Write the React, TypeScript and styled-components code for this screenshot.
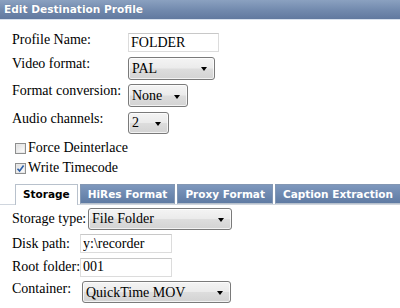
import { createGlobalStyle } from "styled-components";
import styled from "styled-components";

const GlobalStyle = createGlobalStyle`
  html, body {
    margin: 0;
    padding: 0;
    background: #ffffff;
  }
  body {
    font-family: "Liberation Serif", "Times New Roman", serif;
    font-size: 14px;
    color: #000;
  }
`;

const Page = styled.div`
  width: 400px;
  height: 308px;
  overflow: hidden;
  background: #fff;
`;

const Header = styled.div`
  height: 19px;
  line-height: 19px;
  padding-left: 4px;
  background: linear-gradient(to bottom, #8ba1c0 0%, #7189ad 55%, #61799f 100%);
  border-bottom: 1px solid #d9e2ee;
  color: #fff;
  font-family: "DejaVu Sans", Verdana, sans-serif;
  font-weight: bold;
  font-size: 10.6px;
  text-shadow: 0 0 1px rgba(40, 60, 90, 0.4);
`;

const FormSection = styled.div`
  padding: 13px 0 0 12px;
`;

const FieldGrid = styled.div`
  display: grid;
  grid-template-columns: 116px auto;
  row-gap: 4.5px;
  justify-items: start;
`;

const Label = styled.label<{ $width?: number }>`
  font-size: 14px;
  line-height: 16px;
  white-space: nowrap;
  margin-top: -1px;
  align-self: start;
  ${(p) => (p.$width ? `width: ${p.$width}px; flex: none;` : "")}
`;

const TextInput = styled.input<{ $width: number }>`
  box-sizing: border-box;
  width: ${(p) => p.$width}px;
  height: 19px;
  margin: 0;
  padding: 0 2px;
  border: 1px solid #dcdcdc;
  border-top-color: #c8c8c8;
  background: #fff;
  font-family: "Liberation Serif", "Times New Roman", serif;
  font-size: 14px;
  color: #000;
  outline: none;
`;

const SelectWrap = styled.div<{ $width: number; $height?: number }>`
  position: relative;
  box-sizing: border-box;
  width: ${(p) => p.$width}px;
  height: ${(p) => p.$height ?? 23}px;
  border: 1px solid #7a7a7a;
  border-radius: 3px;
  background: linear-gradient(to bottom, #f4f4f4 0%, #ebebeb 48%, #dddddd 52%, #d3d3d3 100%);
  box-shadow: inset 0 0 0 1px rgba(255, 255, 255, 0.7);

  &::after {
    content: "";
    position: absolute;
    right: 7px;
    top: 50%;
    margin-top: -1px;
    border-left: 3.5px solid transparent;
    border-right: 3.5px solid transparent;
    border-top: 4px solid #000;
  }
`;

const Select = styled.select`
  appearance: none;
  -webkit-appearance: none;
  width: 100%;
  height: 100%;
  margin: 0;
  padding: 0 16px 0 3px;
  border: none;
  background: transparent;
  font-family: "Liberation Serif", "Times New Roman", serif;
  font-size: 14px;
  color: #000;
  outline: none;
`;

const CheckList = styled.div`
  margin-top: 5px;
  padding-left: 3px;
`;

const CheckRow = styled.label`
  display: flex;
  align-items: center;
  height: 19.5px;
  font-size: 14px;
  line-height: 16px;
`;

const CheckBox = styled.span`
  box-sizing: border-box;
  width: 11px;
  height: 11px;
  margin-right: 2px;
  margin-top: 1px;
  border: 1px solid #8e8f8f;
  background: linear-gradient(to bottom right, #dcdcdc 0%, #f2f2f2 60%, #ffffff 100%);
  box-shadow: inset 0 0 0 1px #e9e9e9;
  display: flex;
  align-items: center;
  justify-content: center;
`;

const TabStrip = styled.div`
  display: flex;
  gap: 2px;
  margin-top: 6px;
  padding-left: 15px;
  border-bottom: 1px solid #d0d6de;
  height: 20px;
  align-items: flex-end;
`;

const Tab = styled.div<{ $active?: boolean }>`
  box-sizing: border-box;
  height: ${(p) => (p.$active ? 21 : 20)}px;
  margin-bottom: ${(p) => (p.$active ? -1 : 0)}px;
  padding: 0 7px;
  line-height: 18px;
  font-family: "DejaVu Sans", Verdana, sans-serif;
  font-weight: bold;
  font-size: 10.5px;
  white-space: nowrap;
  border: 1px solid ${(p) => (p.$active ? "#b8c1cc" : "#8397b3")};
  border-bottom: ${(p) => (p.$active ? "none" : "1px solid #b6c0cc")};
  color: ${(p) => (p.$active ? "#000" : "#fff")};
  background: ${(p) =>
    p.$active
      ? "#ffffff"
      : "linear-gradient(to bottom, #7e98bd 0%, #6e89b0 50%, #5f7ba3 100%)"};
`;

const TabPanel = styled.div`
  padding: 3px 0 0 12px;
  display: flex;
  flex-direction: column;
  gap: 4.5px;
`;

const PanelRow = styled.div<{ $align?: string }>`
  display: flex;
  align-items: ${(p) => p.$align ?? "center"};
`;

const PanelLabel = styled(Label)`
  align-self: auto;
  margin-top: 0;
`;

const Check = () => (
  <svg width="9" height="9" viewBox="0 0 9 9">
    <path d="M1.5 4.8 L3.6 7 L7.6 1.5" fill="none" stroke="#2b5ea8" strokeWidth="1.6" />
  </svg>
);

export default function App() {
  return (
    <Page>
      <GlobalStyle />
      <Header>Edit Destination Profile</Header>
      <FormSection>
        <FieldGrid>
          <Label>Profile Name:</Label>
          <TextInput $width={91} defaultValue="FOLDER" />
          <Label>Video format:</Label>
          <SelectWrap $width={87}>
            <Select defaultValue="PAL">
              <option>PAL</option>
              <option>NTSC</option>
            </Select>
          </SelectWrap>
          <Label>Format conversion:</Label>
          <SelectWrap $width={60}>
            <Select defaultValue="None">
              <option>None</option>
            </Select>
          </SelectWrap>
          <Label>Audio channels:</Label>
          <SelectWrap $width={41} $height={22}>
            <Select defaultValue="2">
              <option>2</option>
              <option>4</option>
              <option>8</option>
            </Select>
          </SelectWrap>
        </FieldGrid>
        <CheckList>
          <CheckRow>
            <CheckBox />
            Force Deinterlace
          </CheckRow>
          <CheckRow>
            <CheckBox>
              <Check />
            </CheckBox>
            Write Timecode
          </CheckRow>
        </CheckList>
      </FormSection>
      <TabStrip>
        <Tab $active>Storage</Tab>
        <Tab>HiRes Format</Tab>
        <Tab>Proxy Format</Tab>
        <Tab>Caption Extraction</Tab>
      </TabStrip>
      <TabPanel>
        <PanelRow>
          <PanelLabel $width={76}>Storage type:</PanelLabel>
          <SelectWrap $width={144} $height={22}>
            <Select defaultValue="File Folder">
              <option>File Folder</option>
            </Select>
          </SelectWrap>
        </PanelRow>
        <PanelRow>
          <PanelLabel $width={68}>Disk path:</PanelLabel>
          <TextInput $width={92} defaultValue="y:\recorder" />
        </PanelRow>
        <PanelRow>
          <PanelLabel $width={68}>Root folder:</PanelLabel>
          <TextInput $width={92} defaultValue="001" />
        </PanelRow>
        <PanelRow $align="flex-start">
          <PanelLabel $width={70}>Container:</PanelLabel>
          <SelectWrap $width={149} $height={22}>
            <Select defaultValue="QuickTime MOV">
              <option>QuickTime MOV</option>
            </Select>
          </SelectWrap>
        </PanelRow>
      </TabPanel>
    </Page>
  );
}
